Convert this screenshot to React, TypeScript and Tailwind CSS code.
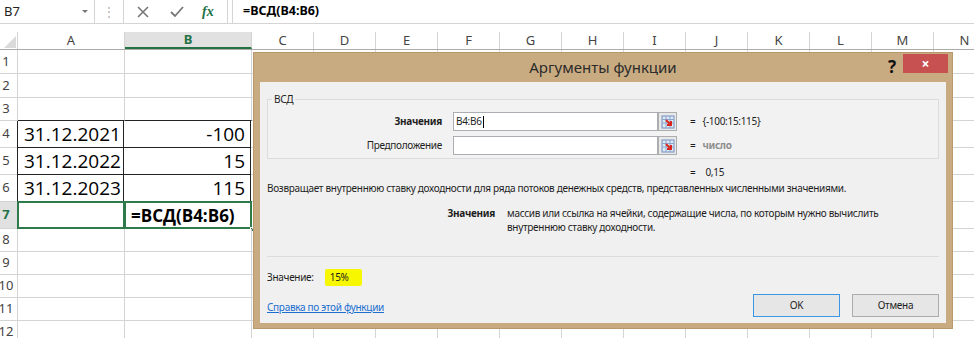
import React from "react";

const UI = { fontFamily: '"Noto Sans", "Open Sans", sans-serif' };
const CELL = { fontFamily: '"Open Sans", "Noto Sans", sans-serif' };

const COLS = ["A", "B", "C", "D", "E", "F", "G", "H", "I", "J", "K", "L", "M", "N"];
const COLW = [107, 127, 62, 62, 62, 62, 62, 62, 62, 62, 62, 62, 62, 62];
const ROWH = [24, 24, 23, 27, 27, 27, 27, 23, 23, 23, 23, 23];

type CellData = { text?: string; align?: "left" | "right"; bold?: boolean };
const DATA: Record<string, CellData> = {
  A4: { text: "31.12.2021" },
  B4: { text: "-100", align: "right" },
  A5: { text: "31.12.2022" },
  B5: { text: "15", align: "right" },
  A6: { text: "31.12.2023" },
  B6: { text: "115", align: "right" },
  B7: { text: "=ВСД(B4:B6)", bold: true },
};

function CollapseIcon() {
  return (
    <svg width="14" height="14" viewBox="0 0 14 14">
      <rect x="1" y="1" width="12" height="12" fill="#dfe9f6" stroke="#6f8fbf" strokeWidth="1" />
      <line x1="1" y1="4.5" x2="13" y2="4.5" stroke="#8aa6cf" />
      <line x1="1" y1="8" x2="13" y2="8" stroke="#8aa6cf" />
      <line x1="5" y1="1" x2="5" y2="13" stroke="#8aa6cf" />
      <line x1="9" y1="1" x2="9" y2="13" stroke="#8aa6cf" />
      <path d="M5 5 L10 10 M10 6 L10 10 L6 10" stroke="#d9261c" strokeWidth="2" fill="none" />
    </svg>
  );
}

function Dialog() {
  return (
    <div
      className="absolute left-[253px] top-[52px] w-[700px] h-[277px] bg-[#c9ab81] border border-[#b8996e] flex flex-col text-[10px] tracking-[-0.3px] text-[#1e1e1e]"
      style={UI}
    >
      <div className="relative h-[29px] flex items-center justify-center shrink-0 tracking-normal">
        <span className="text-[15px] text-[#2b2b2b]">Аргументы функции</span>
        <span className="absolute right-[56px] top-[1px] text-[17px] font-bold text-[#111]">?</span>
        <div className="absolute right-[4px] top-[1px] w-[45px] h-[19px] bg-[#c75050] flex items-center justify-center text-white text-[14px] font-bold leading-none">
          ×
        </div>
      </div>
      <div className="mx-[6px] mb-[5px] flex-1 bg-[#f0f0f0] flex flex-col px-[7px]">
        <fieldset className="mt-[11px] h-[66px] border border-[#dcdcdc] bg-[#f2f2f2] px-0 pt-0">
          <legend className="ml-[4px] px-[2px] leading-[12px]">ВСД</legend>
          <div className="flex items-center h-[19px] mt-[7px]">
            <div className="w-[174px] text-right font-bold">Значения</div>
            <div className="ml-[11px] w-[205px] h-[19px] bg-white border border-[#abadb3] flex items-center pl-[2px]">
              B4:B6<span className="inline-block w-px h-[12px] bg-black ml-px" />
            </div>
            <div className="w-[19px] h-[19px] border border-[#adadad] bg-[#e9e9e9] flex items-center justify-center">
              <CollapseIcon />
            </div>
            <span className="ml-[13px]">=</span>
            <span className="ml-[7px]">{"{-100:15:115}"}</span>
          </div>
          <div className="flex items-center h-[19px] mt-[5px]">
            <div className="w-[174px] text-right">Предположение</div>
            <div className="ml-[11px] w-[205px] h-[19px] bg-white border border-[#abadb3]" />
            <div className="w-[19px] h-[19px] border border-[#adadad] bg-[#e9e9e9] flex items-center justify-center">
              <CollapseIcon />
            </div>
            <span className="ml-[13px]">=</span>
            <span className="ml-[7px] text-[#8e8e8e] font-bold">число</span>
          </div>
        </fieldset>
        <div className="flex items-center h-[14px] mt-[6px]">
          <span className="ml-[423px]">=</span>
          <span className="ml-[10px]">0,15</span>
        </div>
        <div className="mt-[2px] h-[14px] leading-[14px]">
          Возвращает внутреннюю ставку доходности для ряда потоков денежных средств, представленных численными значениями.
        </div>
        <div className="flex mt-[11px] leading-[14px]">
          <div className="w-[228px] text-right font-bold">Значения</div>
          <div className="ml-[12px]">
            массив или ссылка на ячейки, содержащие числа, по которым нужно вычислить
            <br />
            внутреннюю ставку доходности.
          </div>
        </div>
        <div className="mt-[22px] h-px bg-[#dcdcdc]" />
        <div className="flex items-center mt-[12px] h-[17px]">
          <span>Значение:</span>
          <span className="ml-[11px] h-[17px] w-[37px] bg-[#f7f700] rounded-[2px] pl-[5px] flex items-center">15%</span>
        </div>
        <div className="flex items-center mt-[8px]">
          <span className="text-[#1a6fd0] underline mt-[3px]">Справка по этой функции</span>
          <div className="ml-auto flex gap-[12px]">
            <div className="w-[87px] h-[23px] border border-[#3c96e6] bg-[#e6e6e6] flex items-center justify-center">OK</div>
            <div className="w-[87px] h-[23px] border border-[#acacac] bg-[#e6e6e6] flex items-center justify-center">Отмена</div>
          </div>
        </div>
      </div>
    </div>
  );
}

export default function App() {
  return (
    <div className="relative w-[974px] h-[338px] overflow-hidden bg-white">
      {/* formula bar */}
      <div className="flex h-[24px] border-b border-[#d4d4d4] text-[13px] text-[#222]" style={UI}>
        <div className="w-[95px] h-[23px] border-r border-[#d4d4d4] flex items-center pl-[4px] relative">
          B7
          <svg className="absolute left-[82px] top-[10px]" width="6" height="4" viewBox="0 0 6 4">
            <path d="M0 0 L6 0 L3 3 Z" fill="#777" />
          </svg>
        </div>
        <div className="w-[28px] flex items-center justify-center text-[#b0b0b0] text-[12px]">⋮</div>
        <div className="w-[105px] h-[23px] border-x border-[#d4d4d4] flex items-center">
          <svg className="ml-[13px]" width="12" height="12" viewBox="0 0 12 12">
            <path d="M1 1 L11 11 M11 1 L1 11" stroke="#777" strokeWidth="1.6" />
          </svg>
          <svg className="ml-[21px]" width="14" height="12" viewBox="0 0 14 12">
            <path d="M1 6 L5 10 L13 1" stroke="#777" strokeWidth="1.8" fill="none" />
          </svg>
          <span className="ml-[18px] text-[#217346] italic font-bold text-[14px]" style={{ fontFamily: '"Liberation Serif", serif' }}>
            fx
          </span>
        </div>
        <div className="ml-[4px] flex-1 h-[23px] border-l border-[#d4d4d4] flex items-center pl-[10px] font-bold text-[12.5px] text-black">
          =ВСД(B4:B6)
        </div>
      </div>
      <div className="h-[8px]" />
      {/* column headers */}
      <div className="flex h-[18px] border-b border-[#ababab] text-[13px] text-[#444]" style={UI}>
        <div className="w-[18px] shrink-0 border-r border-[#d4d4d4] relative">
          <svg className="absolute right-[1px] bottom-[1px]" width="12" height="12" viewBox="0 0 12 12">
            <path d="M12 0 L12 12 L0 12 Z" fill="#dadada" />
          </svg>
        </div>
        {COLS.map((c, i) => (
          <div
            key={c}
            style={{ width: COLW[i] }}
            className={
              c === "B"
                ? "shrink-0 flex items-center justify-center bg-[#e1e1e1] border-r border-[#d4d4d4] border-b-2 border-b-[#217346] text-[#217346] font-bold"
                : "shrink-0 flex items-center justify-center border-r border-[#d4d4d4]"
            }
          >
            {c}
          </div>
        ))}
      </div>
      {/* rows */}
      {ROWH.map((h, ri) => {
        const r = ri + 1;
        const sel = r === 7;
        return (
          <div key={r} className="flex" style={{ height: h }}>
            <div
              className={
                sel
                  ? "w-[18px] shrink-0 border-r border-b border-[#d4d4d4] bg-[#e1e1e1] text-[#217346] font-bold text-[13px] relative"
                  : "w-[18px] shrink-0 border-r border-b border-[#d4d4d4] text-[#444] text-[13px] relative"
              }
              style={UI}
            >
              <div className="absolute left-[-6px] w-[24px] top-0 bottom-0 flex items-center justify-center">{r}</div>
            </div>
            {COLS.map((c, ci) => {
              const key = c + r;
              const d = DATA[key];
              const boxed = (c === "A" || c === "B") && r >= 4 && r <= 6;
              const aboveBox = (c === "A" || c === "B") && r === 3;
              const green = (c === "A" || c === "B") && r === 7;
              let cls = "shrink-0 relative flex items-center border-r border-b ";
              if (boxed) cls += "border-[#222] ";
              else if (aboveBox) cls += "border-r-[#d4d4d4] border-b-[#222] ";
              else cls += "border-[#d4d4d4] ";
              if (boxed && c === "A") cls += "border-l border-l-[#222] ";
              return (
                <div
                  key={key}
                  style={{ width: COLW[ci], marginLeft: boxed && c === "A" ? -1 : 0, ...CELL }}
                  className={cls}
                >
                  {d && d.text && (
                    <span
                      className={
                        (d.align === "right" ? "ml-auto pr-[5px] " : "pl-[6px] ") +
                        (d.bold ? "font-bold text-[17px] " : "text-[19px] ") +
                        "text-black whitespace-nowrap leading-none"
                      }
                    >
                      {d.text}
                    </span>
                  )}
                  {green && <div className="absolute -left-px -top-px -right-px -bottom-px border-2 border-[#2e7a4a] pointer-events-none" />}
                  {green && c === "B" && (
                    <div className="absolute right-[-4px] bottom-[-4px] w-[5px] h-[5px] bg-[#217346] border border-white" />
                  )}
                </div>
              );
            })}
          </div>
        );
      })}
      <Dialog />
    </div>
  );
}
